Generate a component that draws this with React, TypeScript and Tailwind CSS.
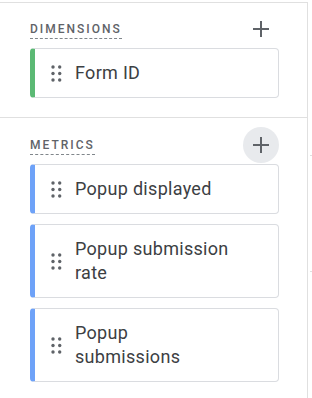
import React from "react";

function Plus() {
  return (
    <svg width="18" height="18" viewBox="0 0 18 18" aria-hidden="true">
      <path d="M9 1v16M1 9h16" stroke="#5f6368" strokeWidth="2" fill="none" />
    </svg>
  );
}

function Dots() {
  const xs = [2, 8.7];
  const ys = [2, 8.5, 15];
  return (
    <svg width="11" height="17" viewBox="0 0 11 17" aria-hidden="true" className="shrink-0">
      {xs.map((x) =>
        ys.map((y) => <circle key={`${x}-${y}`} cx={x} cy={y} r="1.7" fill="#5f6368" />)
      )}
    </svg>
  );
}

function Card({ label, color }: { label: string; color: "green" | "blue" }) {
  return (
    <div
      className={
        "flex items-center rounded-[4px] border border-[#dadce0] border-l-[5px] py-[12px] pl-[16px] " +
        (color === "green" ? "border-l-[#5bb974]" : "border-l-[#6ea2f8]")
      }
    >
      <Dots />
      <div className="ml-[13px] w-[158px] text-[18px] leading-[24px] tracking-[0.3px] text-[#3c4043]">
        {label}
      </div>
    </div>
  );
}

function Header({ title, active }: { title: string; active?: boolean }) {
  return (
    <div className="flex h-[36px] items-center justify-between">
      <span className="mt-[2px] border-b border-dashed border-[#80868b] pb-[2px] text-[12px] font-medium uppercase leading-[14px] tracking-[2px] text-[#5f6368]">
        {title}
      </span>
      <div
        className={
          "flex h-[36px] w-[36px] items-center justify-center rounded-full " +
          (active ? "bg-[#e8eaed]" : "")
        }
      >
        <Plus />
      </div>
    </div>
  );
}

export default function App() {
  return (
    <div
      className="flex h-[398px] w-[312px] overflow-hidden bg-white"
      style={{ fontFamily: "Roboto, 'Noto Sans', Arial, sans-serif" }}
    >
      <div className="mt-[2px] w-[308px] shrink-0 border-r border-t border-[#e0e0e0]">
        <div className="border-b border-[#e0e0e0] pb-[19px] pl-[30px] pr-[28px] pt-[8px]">
          <Header title="Dimensions" />
          <div className="mt-[1px]">
            <Card label="Form ID" color="green" />
          </div>
        </div>
        <div className="pl-[30px] pr-[28px] pt-[9px]">
          <Header title="Metrics" active />
          <div className="mt-[1px] flex flex-col gap-[10px]">
            <Card label="Popup displayed" color="blue" />
            <Card label="Popup submission rate" color="blue" />
            <Card label="Popup submissions" color="blue" />
          </div>
        </div>
      </div>
      <div className="w-[4px] shrink-0 pl-[2px]">
        <div className="h-[156px] border-b border-[#e0e0e0]" />
        <div className="h-[116px] border-b border-[#e0e0e0]" />
      </div>
    </div>
  );
}
